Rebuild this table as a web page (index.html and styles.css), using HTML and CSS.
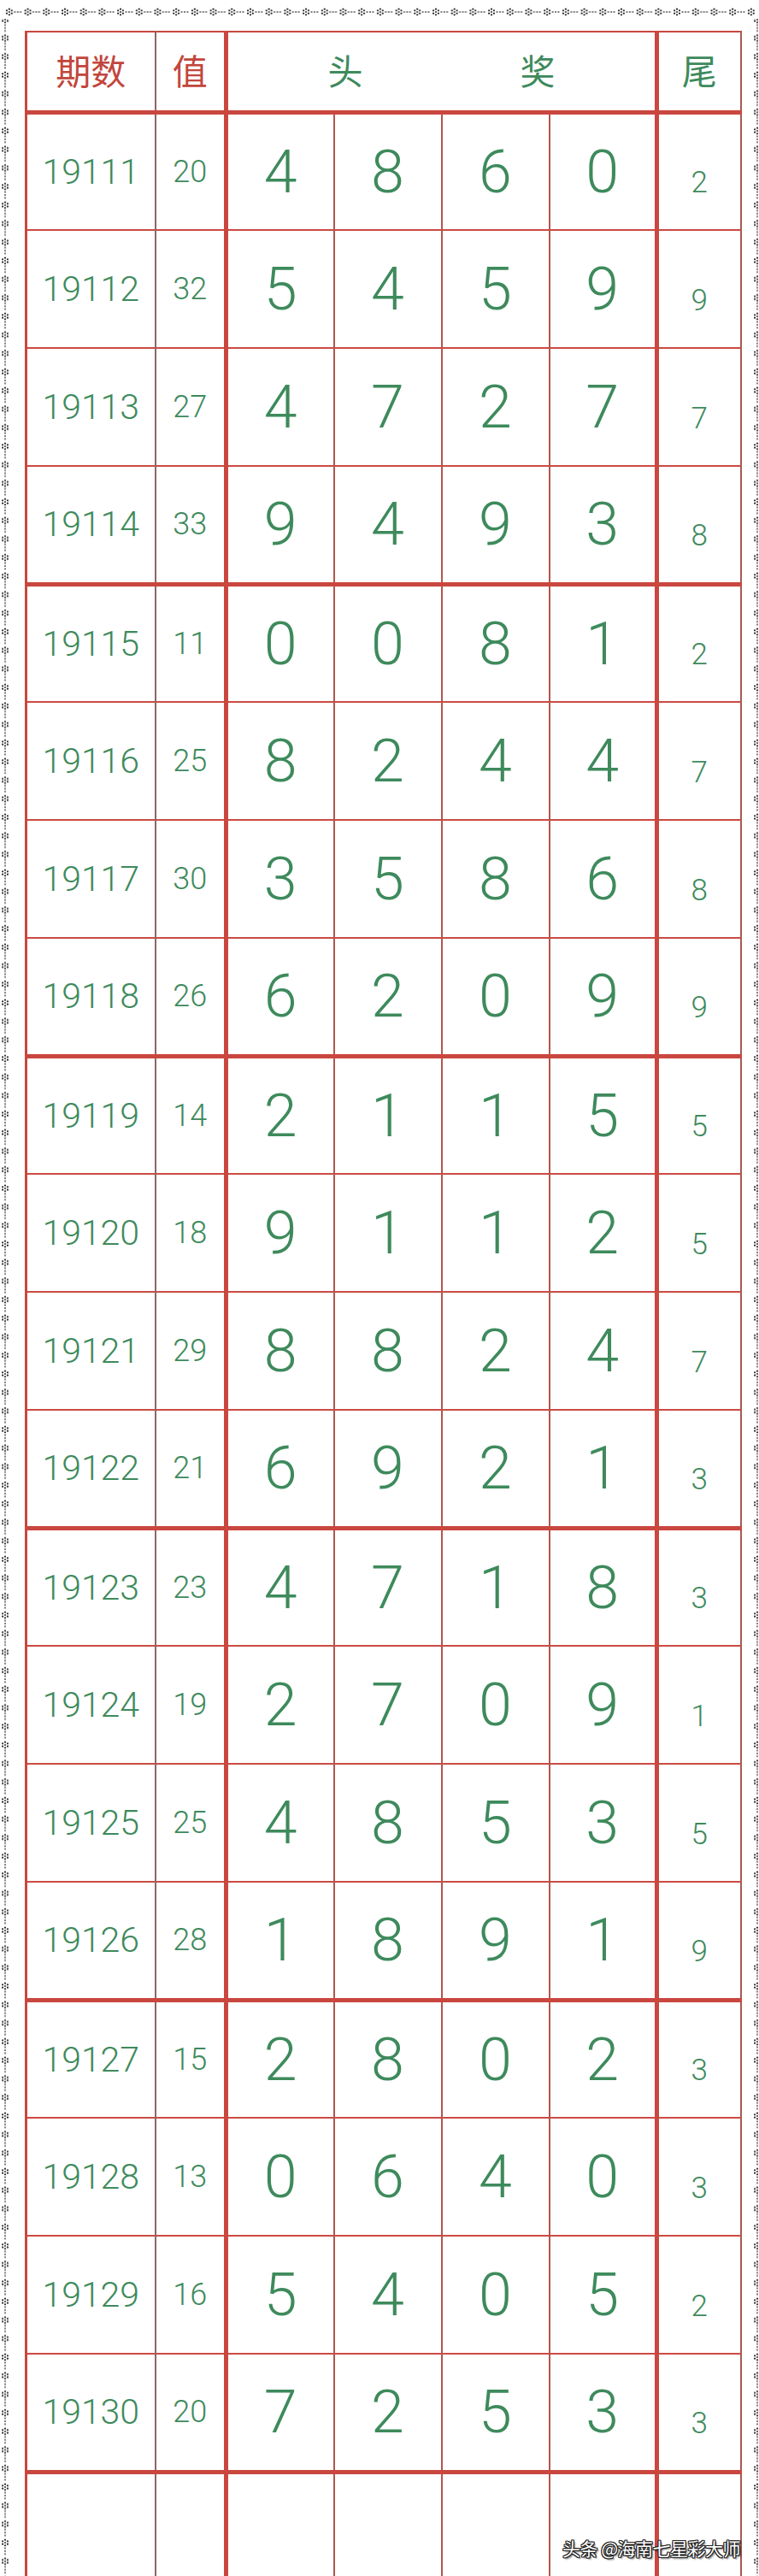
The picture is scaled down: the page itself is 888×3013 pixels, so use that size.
FILE: index.html
```html
<!DOCTYPE html>
<html lang="zh">
<head>
<meta charset="utf-8">
<title>期数 值 头奖 尾</title>
<link rel="stylesheet" href="styles.css">
</head>
<body>
<div class="sheet">
  <svg class="frame" width="888" height="3013" viewBox="0 0 888 3013" aria-hidden="true">
    <defs>
      <g id="flower">
        <circle cx="0" cy="0" r="1" />
        <circle cx="0" cy="-3.3" r="1.1" />
        <circle cx="2.9" cy="-1.65" r="1.1" />
        <circle cx="2.9" cy="1.65" r="1.1" />
        <circle cx="0" cy="3.3" r="1.1" />
        <circle cx="-2.9" cy="1.65" r="1.1" />
        <circle cx="-2.9" cy="-1.65" r="1.1" />
      </g>
      <pattern id="ph" x="0" y="6" width="21.7" height="16" patternUnits="userSpaceOnUse">
        <use href="#flower" x="10.85" y="8" />
        <rect x="16.3" y="7.4" width="2" height="1.2" />
        <rect x="19.8" y="7.4" width="2" height="1.2" />
        <rect x="1.4" y="7.4" width="2" height="1.2" />
      </pattern>
      <pattern id="pv" x="-2" y="12" width="16" height="21.7" patternUnits="userSpaceOnUse">
        <use href="#flower" x="8" y="10.85" />
        <rect x="7.4" y="16.3" width="1.2" height="2" />
        <rect x="7.4" y="19.8" width="1.2" height="2" />
        <rect x="7.4" y="1.4" width="1.2" height="2" />
      </pattern>
    </defs>
    <g class="frame-ink">
      <rect x="6" y="6" width="878" height="16" fill="url(#ph)" />
      <rect x="-2" y="22" width="16" height="2991" fill="url(#pv)" />
      <rect x="876" y="22" width="16" height="2991" fill="url(#pv)" />
    </g>
  </svg>

  <table class="grid">
    <colgroup>
      <col class="w-no"><col class="w-val"><col class="w-d"><col class="w-d"><col class="w-d"><col class="w-d"><col class="w-tail">
    </colgroup>
    <thead>
      <tr class="head">
        <th class="c-no red">期数</th>
        <th class="c-val red">值</th>
        <th class="c-d last green" colspan="4"><span class="prize"><span>头</span><span>奖</span></span></th>
        <th class="c-tail green">尾</th>
      </tr>
    </thead>
    <tbody>
      <tr><td class="c-no">19111</td><td class="c-val">20</td><td class="c-d">4</td><td class="c-d">8</td><td class="c-d">6</td><td class="c-d last">0</td><td class="c-tail">2</td></tr>
      <tr><td class="c-no">19112</td><td class="c-val">32</td><td class="c-d">5</td><td class="c-d">4</td><td class="c-d">5</td><td class="c-d last">9</td><td class="c-tail">9</td></tr>
      <tr><td class="c-no">19113</td><td class="c-val">27</td><td class="c-d">4</td><td class="c-d">7</td><td class="c-d">2</td><td class="c-d last">7</td><td class="c-tail">7</td></tr>
      <tr class="grp"><td class="c-no">19114</td><td class="c-val">33</td><td class="c-d">9</td><td class="c-d">4</td><td class="c-d">9</td><td class="c-d last">3</td><td class="c-tail">8</td></tr>
      <tr><td class="c-no">19115</td><td class="c-val">11</td><td class="c-d">0</td><td class="c-d">0</td><td class="c-d">8</td><td class="c-d last">1</td><td class="c-tail">2</td></tr>
      <tr><td class="c-no">19116</td><td class="c-val">25</td><td class="c-d">8</td><td class="c-d">2</td><td class="c-d">4</td><td class="c-d last">4</td><td class="c-tail">7</td></tr>
      <tr><td class="c-no">19117</td><td class="c-val">30</td><td class="c-d">3</td><td class="c-d">5</td><td class="c-d">8</td><td class="c-d last">6</td><td class="c-tail">8</td></tr>
      <tr class="grp"><td class="c-no">19118</td><td class="c-val">26</td><td class="c-d">6</td><td class="c-d">2</td><td class="c-d">0</td><td class="c-d last">9</td><td class="c-tail">9</td></tr>
      <tr><td class="c-no">19119</td><td class="c-val">14</td><td class="c-d">2</td><td class="c-d">1</td><td class="c-d">1</td><td class="c-d last">5</td><td class="c-tail">5</td></tr>
      <tr><td class="c-no">19120</td><td class="c-val">18</td><td class="c-d">9</td><td class="c-d">1</td><td class="c-d">1</td><td class="c-d last">2</td><td class="c-tail">5</td></tr>
      <tr><td class="c-no">19121</td><td class="c-val">29</td><td class="c-d">8</td><td class="c-d">8</td><td class="c-d">2</td><td class="c-d last">4</td><td class="c-tail">7</td></tr>
      <tr class="grp"><td class="c-no">19122</td><td class="c-val">21</td><td class="c-d">6</td><td class="c-d">9</td><td class="c-d">2</td><td class="c-d last">1</td><td class="c-tail">3</td></tr>
      <tr><td class="c-no">19123</td><td class="c-val">23</td><td class="c-d">4</td><td class="c-d">7</td><td class="c-d">1</td><td class="c-d last">8</td><td class="c-tail">3</td></tr>
      <tr><td class="c-no">19124</td><td class="c-val">19</td><td class="c-d">2</td><td class="c-d">7</td><td class="c-d">0</td><td class="c-d last">9</td><td class="c-tail">1</td></tr>
      <tr><td class="c-no">19125</td><td class="c-val">25</td><td class="c-d">4</td><td class="c-d">8</td><td class="c-d">5</td><td class="c-d last">3</td><td class="c-tail">5</td></tr>
      <tr class="grp"><td class="c-no">19126</td><td class="c-val">28</td><td class="c-d">1</td><td class="c-d">8</td><td class="c-d">9</td><td class="c-d last">1</td><td class="c-tail">9</td></tr>
      <tr><td class="c-no">19127</td><td class="c-val">15</td><td class="c-d">2</td><td class="c-d">8</td><td class="c-d">0</td><td class="c-d last">2</td><td class="c-tail">3</td></tr>
      <tr><td class="c-no">19128</td><td class="c-val">13</td><td class="c-d">0</td><td class="c-d">6</td><td class="c-d">4</td><td class="c-d last">0</td><td class="c-tail">3</td></tr>
      <tr><td class="c-no">19129</td><td class="c-val">16</td><td class="c-d">5</td><td class="c-d">4</td><td class="c-d">0</td><td class="c-d last">5</td><td class="c-tail">2</td></tr>
      <tr class="grp"><td class="c-no">19130</td><td class="c-val">20</td><td class="c-d">7</td><td class="c-d">2</td><td class="c-d">5</td><td class="c-d last">3</td><td class="c-tail">3</td></tr>
      <tr class="empty"><td class="c-no"></td><td class="c-val"></td><td class="c-d"></td><td class="c-d"></td><td class="c-d"></td><td class="c-d last"></td><td class="c-tail"></td></tr>
    </tbody>
  </table>

  <div class="watermark">头条 @海南七星彩大师</div>
</div>
</body>
</html>
```

FILE: styles.css
```css
html, body {
  margin: 0;
  padding: 0;
  background: #ffffff;
}

.sheet {
  position: relative;
  width: 888px;
  height: 3013px;
  overflow: hidden;
  background: #ffffff;
  box-sizing: border-box;
  padding: 36px 0 0 29px;
}

.frame {
  position: absolute;
  left: 0;
  top: 0;
  pointer-events: none;
}

.frame-ink {
  fill: #c0564c;
  opacity: 0.85;
}

.grid {
  border-collapse: collapse;
  table-layout: fixed;
  width: 836px;
  font-family: Roboto, "Liberation Sans", "Noto Sans CJK SC", sans-serif;
  font-weight: 300;
  color: #3e8a5c;
}

.w-no { width: 151px; }
.w-val { width: 83px; }
.w-d { width: 126px; }
.w-tail { width: 98px; }

.grid th,
.grid td {
  padding: 0;
  text-align: center;
  vertical-align: middle;
}

.head {
  height: 94px;
}

.head th {
  border-top: 2px solid #c9473f;
  border-bottom: 5px solid #c9473f;
  font-family: "Noto Sans CJK SC", sans-serif;
  font-weight: 400;
  font-size: 41px;
  line-height: 1;
  padding-bottom: 4px;
}

.red { color: #c2463c; }
.green { color: #3e8a5c; }

.prize {
  display: inline-flex;
  gap: 184px;
}

.grid tbody tr {
  height: 138px;
  border-bottom: 2px solid #cc4b43;
}

.grid tbody tr.grp {
  border-bottom: 5px solid #c9473f;
}

.c-no {
  border-left: 3px solid #c9473f;
  border-right: 2px solid #8e6761;
  font-size: 41px;
}

.c-val {
  border-right: 5px solid #c9473f;
  font-size: 36px;
}

.c-d {
  border-right: 2px solid #b0574e;
  font-size: 70px;
}

.c-d.last {
  border-right: 5px solid #c9473f;
}

.c-tail {
  border-right: 2px solid #a85a52;
  font-size: 35px;
  padding-top: 26px !important;
}

.head .c-no,
.head .c-val,
.head .c-d,
.head .c-tail {
  font-size: 41px;
  padding-top: 0 !important;
}

.watermark {
  position: absolute;
  right: 22px;
  top: 2966px;
  font-family: "Noto Sans CJK SC", sans-serif;
  font-size: 21px;
  line-height: 28px;
  color: #ffffff;
  letter-spacing: -0.5px;
  text-shadow:
    1px 1px 0 #222, -1px -1px 0 #222, 1px -1px 0 #222, -1px 1px 0 #222,
    0 1px 0 #222, 0 -1px 0 #222, 1px 0 0 #222, -1px 0 0 #222,
    2px 2px 2px rgba(0,0,0,0.6);
}
```
